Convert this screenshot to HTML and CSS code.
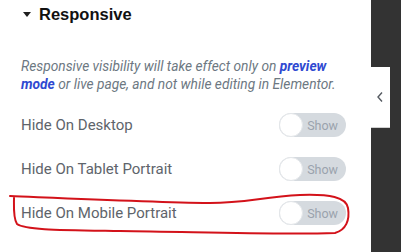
FILE: index.html
```html
<!DOCTYPE html>
<html>
<head>
<meta charset="utf-8">
<link rel="stylesheet" href="styles.css">
</head>
<body>
<div class="app">
  <div class="panel">
    <div class="section-head">
      <span class="caret"></span>
      <span class="section-title">Responsive</span>
    </div>
    <p class="desc">Responsive visibility will take effect only on <a class="link">preview mode</a> or live page, and not while editing in Elementor.</p>
    <div class="row">
      <span class="label">Hide On Desktop</span>
      <span class="switch"><span class="knob"></span><span class="switch-text">Show</span></span>
    </div>
    <div class="row">
      <span class="label">Hide On Tablet Portrait</span>
      <span class="switch"><span class="knob"></span><span class="switch-text">Show</span></span>
    </div>
    <div class="row">
      <span class="label">Hide On Mobile Portrait</span>
      <span class="switch"><span class="knob"></span><span class="switch-text">Show</span></span>
    </div>
  </div>
  <div class="side">
    <div class="tab">
      <svg width="8" height="12" viewBox="0 0 8 12"><path d="M6 1.5 L2 6 L6 10.5" fill="none" stroke="#555a61" stroke-width="1.4"/></svg>
    </div>
  </div>
  <svg class="mark" width="401" height="252" viewBox="0 0 401 252">
    <path d="M10 196 C 60 198, 150 202, 210 203 C 245 203, 262 197, 300 195 C 330 194, 346 197, 348 208 C 350 220, 346 230, 335 233 C 280 235, 200 232, 120 231 C 60 230, 25 230, 17 224 C 13 218, 14 205, 14 198" fill="none" stroke="#d3121a" stroke-width="2" stroke-linecap="round"/>
  </svg>
</div>
</body>
</html>
```
FILE: styles.css
```css
html, body {
  margin: 0;
  padding: 0;
  background: #fff;
}
.app {
  position: relative;
  display: flex;
  width: 401px;
  height: 252px;
  overflow: hidden;
}
.panel {
  width: 371px;
  flex: none;
  box-sizing: border-box;
  padding: 3px 25px 0 21px;
  font-family: Roboto, "Liberation Sans", sans-serif;
}
.section-head {
  display: flex;
  align-items: center;
  height: 22px;
  padding-left: 2px;
}
.caret {
  width: 0;
  height: 0;
  border-left: 4.5px solid transparent;
  border-right: 4.5px solid transparent;
  border-top: 5px solid #1f1f1f;
  margin-right: 8px;
  margin-top: 1px;
}
.section-title {
  font-family: "Liberation Sans", Arial, sans-serif;
  font-weight: 700;
  font-size: 16.5px;
  color: #111;
}
.desc {
  margin: 32px 0 0 0;
  font-style: italic;
  font-size: 13.75px;
  line-height: 18px;
  color: #6d7882;
}
.link {
  color: #2f49d1;
  font-weight: 700;
}
.row {
  display: flex;
  align-items: center;
  justify-content: space-between;
  height: 44px;
}
.desc + .row {
  margin-top: 10px;
}
.label {
  font-size: 15px;
  color: #5e646b;
}
.switch {
  position: relative;
  display: flex;
  align-items: center;
  justify-content: flex-end;
  width: 67px;
  height: 24px;
  border-radius: 12px;
  background: #d5dadf;
  box-sizing: border-box;
  padding-right: 8px;
}
.knob {
  position: absolute;
  left: 0;
  top: 0;
  width: 24px;
  height: 24px;
  box-sizing: border-box;
  border-radius: 50%;
  background: #fff;
  border: 1px solid #e3e6e9;
}
.switch-text {
  font-size: 12.5px;
  color: #9aa3ad;
}
.side {
  flex: 1;
  background: #333333;
  padding-top: 67px;
}
.tab {
  width: 19px;
  height: 61px;
  background: #fff;
  border-bottom: 1px solid #d0d0d0;
  box-sizing: border-box;
  display: flex;
  align-items: center;
  justify-content: center;
  padding-right: 2px;
}
.mark {
  position: absolute;
  left: 0;
  top: 0;
  pointer-events: none;
}
```
